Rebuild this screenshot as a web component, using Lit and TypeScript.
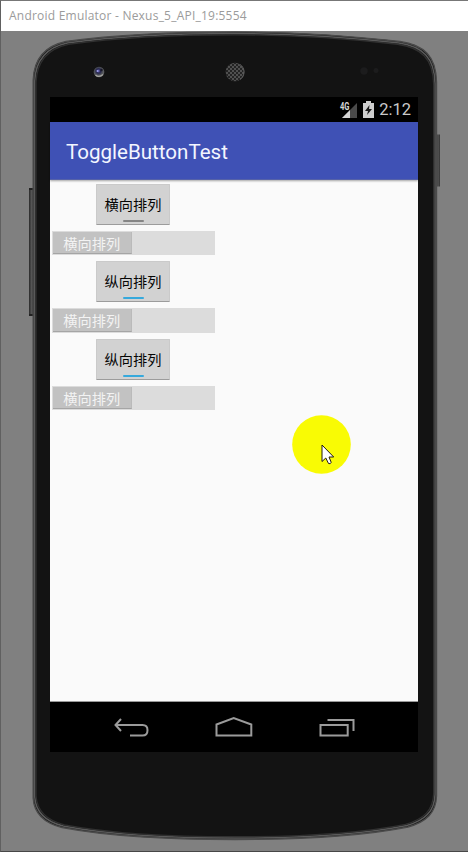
import { LitElement, html, css, svg } from "lit";
import { customElement, property } from "lit/decorators.js";

@customElement("toggle-button")
class ToggleButton extends LitElement {
  @property() label = "";
  @property({ type: Boolean, reflect: true }) on = false;
  static styles = css`
    :host { display: block; width: 74px; height: 41px; margin-left: 46px; }
    .btn { box-sizing: border-box; height: 100%; background: #d2d2d2; border: 1px solid #cacaca;
      border-bottom: 1.5px solid #9c9c9c; border-radius: 1px; display: flex; flex-direction: column;
      align-items: center; color: #050505; font: 14.2px/38px "Noto Sans CJK SC", sans-serif; }
    .text { height: 35px; white-space: nowrap; }
    .bar { width: 21px; height: 2px; background: #858585; border-radius: 1px; }
    :host([on]) .bar { background: #36a9dc; }
  `;
  render() {
    return html`<div class="btn"><span class="text">${this.label}</span><span class="bar"></span></div>`;
  }
}

@customElement("toggle-switch")
class ToggleSwitch extends LitElement {
  @property() label = "";
  static styles = css`
    :host { display: block; width: 163px; height: 24.5px; margin-left: 2px; }
    .track { box-sizing: border-box; height: 100%; background: #dcdcdc; padding: 1px 0.5px; }
    .thumb { box-sizing: border-box; width: 79.5px; height: 22.5px; background: #c2c2c2;
      border-bottom: 1.5px solid #a5a5a5; border-right: 1px solid #bababa; text-align: center;
      color: #f3f3f3; font: 14.2px/22px "Noto Sans CJK SC", sans-serif; }
  `;
  render() {
    return html`<div class="track"><div class="thumb">${this.label}</div></div>`;
  }
}

const OUTLINE =
  "M235 32 C300 32 350 36 400 41.5 C424 45 436 56 436.5 82 V796 C436 813 426 822 408 827 C360 836.5 300 839.500 235 839.5 C165 839.5 110 836.5 62 827.5 C44 823 34 813 33.2 798 V80 C34 58 45 46 66 41.500 C115 35 165 32 235 32 Z";

@customElement("app-root")
class AppRoot extends LitElement {
  static styles = css`
    :host { display: block; width: 468px; height: 852px; overflow: hidden; }
    .window { box-sizing: border-box; position: relative; height: 852px; background: #808080;
      border-left: 1px solid #606060; border-top: 1px solid #777; border-bottom: 1px solid #474747; }
    .title { box-sizing: border-box; height: 30px; background: #fff; color: #9b9b9b; padding-left: 8px;
      font: 12px/29px "Open Sans", sans-serif; letter-spacing: 0.22px; white-space: nowrap; }
    .device { position: absolute; left: -1px; top: -1px; clip-path: inset(31px 0 0 0); }
    .screen { position: relative; width: 368px; height: 655px; margin: 66px 0 0 49px; display: flex;
      flex-direction: column; background: #fafafa; font-family: Roboto, sans-serif; }
    .status { height: 25px; background: #000; display: flex; justify-content: flex-end; align-items: center;
      gap: 5px; padding-right: 7px; box-sizing: border-box; color: #c9c9c9; font-size: 16.5px; line-height: 25px; }
    .status svg { display: block; }
    .clock { height: 25px; box-sizing: border-box; padding-top: 1px; line-height: 24px; }
    .appbar { height: 58px; box-sizing: border-box; background: #3f51b5; color: #f3f6ff; font-size: 20.55px;
      line-height: 60px; padding-left: 16px; border-bottom: 1px solid #5662a8; position: relative;
      box-shadow: 0 1px 2px rgba(0,0,0,.35); }
    .content { flex: 1; display: flex; flex-direction: column; padding-top: 3.5px; }
    .group { display: flex; flex-direction: column; gap: 6px; height: 77.7px; }
    .nav { height: 51px; background: #000; border-top: 1px solid #999; box-sizing: border-box; }
    .nav svg, .pointer svg { display: block; }
    .pointer { position: absolute; left: 291px; top: 414px; }
  `;

  device() {
    return svg`
      <defs>
        <linearGradient id="key" x1="0" y1="0" x2="1" y2="0">
          <stop offset="0" stop-color="#292929"/><stop offset=".5" stop-color="#555"/><stop offset="1" stop-color="#333"/>
        </linearGradient>
        <pattern id="mesh" width="4" height="4" patternUnits="userSpaceOnUse">
          <circle cx="1" cy="1" r=".95" fill="#101010"/><circle cx="3" cy="3" r=".95" fill="#101010"/>
        </pattern>
        <radialGradient id="lens" cx=".45" cy=".4">
          <stop offset="0" stop-color="#6a6ac0"/><stop offset=".4" stop-color="#26264e"/>
          <stop offset=".75" stop-color="#4b4e56"/><stop offset="1" stop-color="#5f6063"/>
        </radialGradient>
      </defs>
      <rect x="29" y="188" width="5" height="128" fill="url(#key)"/>
      <rect x="29" y="188" width="5" height="2" fill="#222"/><rect x="29" y="314" width="5" height="2" fill="#222"/>
      <rect x="436" y="134.5" width="4" height="52" fill="url(#key)"/>
      <path d=${OUTLINE} fill="#131313"/>
      <path d=${OUTLINE} fill="none" stroke="#4b4b4b" stroke-width="1.4"/>
      <path d=${OUTLINE} fill="none" stroke="#5a5a5a" stroke-width="1.5" transform="translate(235 436) scale(.9925 .9963) translate(-235 -436)"/>
      <path d=${OUTLINE} fill="none" stroke="#303030" stroke-width="1.3" transform="translate(235 436) scale(.986 .993) translate(-235 -436)"/>
      <circle cx="99" cy="72" r="5.3" fill="url(#lens)"/>
      <path d="M95.500 75 Q99 78 103 74.500" fill="none" stroke="#a5a5a0" stroke-width="1.2"/>
      <circle cx="97.5" cy="71" r="1" fill="#a0a0e8"/><circle cx="101.5" cy="70" r="1.2" fill="#171727"/>
      <circle cx="235" cy="72" r="9.3" fill="#505050"/><circle cx="235" cy="72" r="9.3" fill="url(#mesh)"/>
      <path d="M240 64.500 A9 9 0 0 1 240 79.500" fill="none" stroke="#606060" stroke-width="1"/>
      <circle cx="364" cy="71" r="3.7" fill="#1c1c1d"/><circle cx="376" cy="70.500" r="2.5" fill="#1c1c1d"/>`;
  }

  render() {
    const rows = [
      { label: "横向排列", on: false },
      { label: "纵向排列", on: true },
      { label: "纵向排列", on: true },
    ];
    return html`<div class="window">
      <div class="title">Android Emulator - Nexus_5_API_19:5554</div>
      <svg class="device" width="468" height="851" viewBox="0 0 468 851">${this.device()}</svg>
      <div class="screen">
        <div class="status">
          <svg width="19" height="19" viewBox="0 0 19 19">
            <path d="M18 3 V18 H3 Z" fill="#4a4a4a"/><path d="M11 10 V18 H3 Z" fill="#d5d5d5"/>
            <rect x="0" y="1" width="11" height="9" fill="#000"/>
            <text x="1" y="10" font-family="Roboto" font-size="10.500" font-weight="700" fill="#d5d5d5" textLength="9.5" lengthAdjust="spacingAndGlyphs">4G</text>
          </svg>
          <svg width="11" height="17" viewBox="0 0 11 17">
            <path d="M3 0 H8 V2 H11 V17 H0 V2 H3 Z" fill="#cdcdcd"/><path d="M6.500 4 L2 10 H5 L4 14 L9 8 H6 Z" fill="#181818"/>
          </svg>
          <span class="clock">2:12</span>
        </div>
        <div class="appbar">ToggleButtonTest</div>
        <div class="content">
          ${rows.map((r) => html`<div class="group">
            <toggle-button .label=${r.label} .on=${r.on}></toggle-button>
            <toggle-switch label="横向排列"></toggle-switch>
          </div>`)}
        </div>
        <div class="nav">
          <svg width="368" height="49" viewBox="50 702 368 49" fill="none" stroke="#9b9b9b" stroke-width="2">
            <path d="M121 719 L115.500 725 L121 731 M115.500 725 H142.500 Q147.500 725 147.500 730.200 Q147.500 735.500 142.500 735.500 H130"/>
            <path d="M216.500 724.500 L233.700 718 L251.300 724.500 V735.500 H216.500 Z"/>
            <path d="M320.500 725 H347.700 V735.500 H320.500 Z M327.500 720 H353.500 V731"/>
          </svg>
        </div>
      </div>
      <div class="pointer">
        <svg width="60" height="60" viewBox="0 0 60 60">
          <circle cx="29.500" cy="29.500" r="29.3" fill="#f9fb04"/>
          <path d="M30 30 V46.500 L33.800 43 L36.500 48.500 Q38.500 49.500 39.200 47.300 L37 42 H41.700 Z" fill="#fff" stroke="#221a10" stroke-width="1"/>
        </svg>
      </div>
    </div>`;
  }
}
